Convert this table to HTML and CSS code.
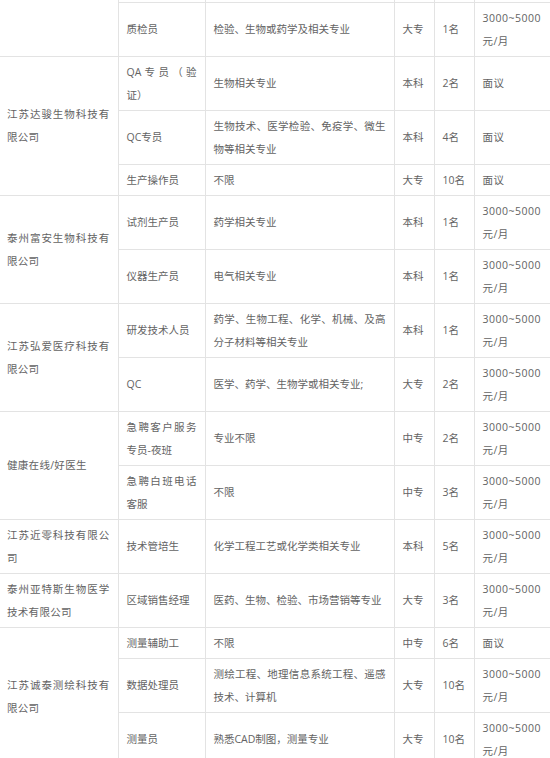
FILE: index.html
```html
<!DOCTYPE html>
<html lang="zh-CN">
<head>
<meta charset="utf-8">
<title>招聘岗位</title>
<link rel="stylesheet" href="styles.css">
</head>
<body>
<table class="jobs">
  <colgroup>
    <col class="c-company">
    <col class="c-post">
    <col class="c-major">
    <col class="c-edu">
    <col class="c-num">
    <col class="c-pay">
  </colgroup>
  <tbody>
    <tr class="tail">
      <td rowspan="2" class="company open-top"></td>
      <td></td><td></td><td></td><td></td><td></td>
    </tr>
    <tr>
      <td>质检员</td><td>检验、生物或药学及相关专业</td><td>大专</td><td>1名</td><td class="pay">3000~5000元/月</td>
    </tr>

    <tr>
      <td rowspan="3" class="company">江苏达骏生物科技有限公司</td>
      <td>QA专员（验证）</td><td>生物相关专业</td><td>本科</td><td>2名</td><td class="pay">面议</td>
    </tr>
    <tr>
      <td>QC专员</td><td>生物技术、医学检验、免疫学、微生物等相关专业</td><td>本科</td><td>4名</td><td class="pay">面议</td>
    </tr>
    <tr>
      <td>生产操作员</td><td>不限</td><td>大专</td><td>10名</td><td class="pay">面议</td>
    </tr>

    <tr>
      <td rowspan="2" class="company">泰州富安生物科技有限公司</td>
      <td>试剂生产员</td><td>药学相关专业</td><td>本科</td><td>1名</td><td class="pay">3000~5000元/月</td>
    </tr>
    <tr>
      <td>仪器生产员</td><td>电气相关专业</td><td>本科</td><td>1名</td><td class="pay">3000~5000元/月</td>
    </tr>

    <tr>
      <td rowspan="2" class="company">江苏弘爱医疗科技有限公司</td>
      <td>研发技术人员</td><td>药学、生物工程、化学、机械、及高分子材料等相关专业</td><td>本科</td><td>1名</td><td class="pay">3000~5000元/月</td>
    </tr>
    <tr>
      <td>QC</td><td>医学、药学、生物学或相关专业;</td><td>大专</td><td>2名</td><td class="pay">3000~5000元/月</td>
    </tr>

    <tr>
      <td rowspan="2" class="company">健康在线/好医生</td>
      <td>急聘客户服务专员-夜班</td><td>专业不限</td><td>中专</td><td>2名</td><td class="pay">3000~5000元/月</td>
    </tr>
    <tr>
      <td>急聘白班电话客服</td><td>不限</td><td>中专</td><td>3名</td><td class="pay">3000~5000元/月</td>
    </tr>

    <tr>
      <td class="company">江苏近零科技有限公司</td>
      <td>技术管培生</td><td>化学工程工艺或化学类相关专业</td><td>本科</td><td>5名</td><td class="pay">3000~5000元/月</td>
    </tr>

    <tr>
      <td class="company">泰州亚特斯生物医学技术有限公司</td>
      <td>区域销售经理</td><td>医药、生物、检验、市场营销等专业</td><td>大专</td><td>3名</td><td class="pay">3000~5000元/月</td>
    </tr>

    <tr>
      <td rowspan="3" class="company">江苏诚泰测绘科技有限公司</td>
      <td>测量辅助工</td><td>不限</td><td>中专</td><td>6名</td><td class="pay">面议</td>
    </tr>
    <tr>
      <td>数据处理员</td><td>测绘工程、地理信息系统工程、遥感技术、计算机</td><td>大专</td><td>10名</td><td class="pay">3000~5000元/月</td>
    </tr>
    <tr>
      <td>测量员</td><td>熟悉CAD制图，测量专业</td><td>大专</td><td>10名</td><td class="pay">3000~5000元/月</td>
    </tr>
  </tbody>
</table>
</body>
</html>
```

FILE: styles.css
```css
html, body {
  margin: 0;
  padding: 0;
  background: #ffffff;
  overflow: hidden;
}

.jobs {
  border-collapse: collapse;
  table-layout: fixed;
  width: 556px;
  font-family: "Open Sans", "Noto Sans CJK SC", sans-serif;
  font-size: 10.5px;
  line-height: 23px;
  color: #636363;
}

.c-company { width: 118px; }
.c-post { width: 87px; }
.c-major { width: 189px; }
.c-edu { width: 40px; }
.c-num { width: 40px; }
.c-pay { width: 82px; }

.jobs td {
  border: 1px solid #e3e3e3;
  padding: 3.5px 8px;
  vertical-align: middle;
  text-align: justify;
  word-break: normal;
}

.jobs td.pay {
  letter-spacing: 0.5px;
}

.jobs tr td:first-child.company {
  border-left: none;
  padding-left: 7px;
  letter-spacing: 0.3px;
}

.jobs tr:not(.tail) > td:first-child:not(.company) {
  border-left: 1px solid #e3e3e3;
}

.jobs .tail td {
  height: 2px;
  padding: 0;
  border-top: none;
  line-height: 0;
}

.jobs .tail td.open-top {
  border-top: none;
}
```
